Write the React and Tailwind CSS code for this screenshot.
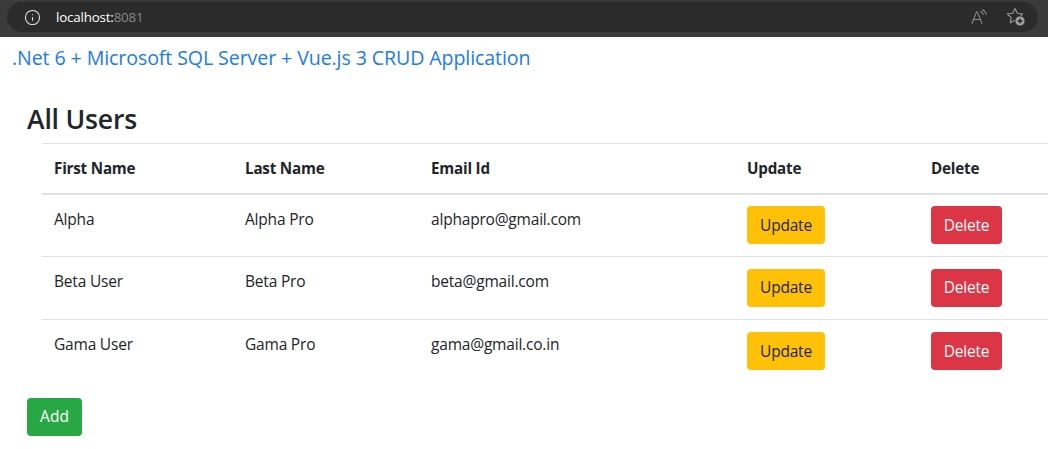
import React from 'react';
import { Info } from 'lucide-react';

const users = [
  { first: 'Alpha', last: 'Alpha Pro', email: 'alphapro@gmail.com' },
  { first: 'Beta User', last: 'Beta Pro', email: 'beta@gmail.com' },
  { first: 'Gama User', last: 'Gama Pro', email: 'gama@gmail.co.in' },
];

// Read aloud icon from the browser bar
function ReadAloudIcon() {
  return (
    <svg width="17" height="16" viewBox="0 0 20 18" fill="none" stroke="#8f8f8f" strokeWidth="1.2">
      <path d="M1 17 L6.5 3 L7.5 3 L13 17" />
      <path d="M3 12 L11 12" />
      <path d="M11 2.5 C13 3 14 4.5 14.5 6.5" />
      <path d="M13 0.5 C16 1.5 17.5 3.5 18 6.5" />
    </svg>
  );
}

// Favourite star with the small plus badge
function FavIcon() {
  return (
    <svg width="20" height="20" viewBox="0 0 20 20" fill="none">
      <path d="M9 1.5 L11.3 6.3 L16.6 7 L12.8 10.6 L13.7 15.8 L9 13.3 L4.3 15.8 L5.2 10.6 L1.4 7 L6.7 6.3 Z" stroke="#9a9a9a" strokeWidth="1.1" strokeLinejoin="round" />
      <circle cx="14" cy="14" r="5" fill="#a3a3a3" stroke="#2b2b2b" strokeWidth="0.8" />
      <path d="M14 11.5 V16.5 M11.5 14 H16.5" stroke="#222222" strokeWidth="1.3" />
    </svg>
  );
}

function BrowserBar() {
  return (
    <div className="h-[37px] bg-[#3b3b3b] pt-[2px] pl-[7px] pr-[10px]">
      <div className="h-[30px] rounded-full bg-[#2b2b2b] flex items-center pl-[17px] pr-[12px]">
        <Info size={17} color="#e6e6e6" strokeWidth={1.5} />
        <div className="ml-[15px] text-[13.4px] text-white font-['Open_Sans',sans-serif] tracking-[-0.2px]">
          localhost:<span className="text-[#8a8a8a]">8081</span>
        </div>
        <div className="ml-auto flex items-center gap-[18px]">
          <ReadAloudIcon />
          <FavIcon />
        </div>
      </div>
    </div>
  );
}

export default function App() {
  return (
    <div className="w-[1048px] h-[449px] overflow-hidden bg-white text-[#212529] font-['Open_Sans',sans-serif]">
      <BrowserBar />
      <a className="block ml-[12px] mt-[8px] h-[26px] text-[19.6px] leading-[26px] text-[#1a7bf2] tracking-[-0.1px]">
        .Net 6 + Microsoft SQL Server + Vue.js 3 CRUD Application
      </a>
      <div className="pl-[27px] pt-[31px]">
        <h3 className="text-[26.6px] leading-[34px] font-semibold tracking-[-0.2px] h-[41px]">All Users</h3>
        <table className="ml-[15px] w-[1021px] table-fixed border-collapse text-[15.5px] tracking-[-0.2px]">
          <colgroup>
            <col className="w-[191px]" />
            <col className="w-[186px]" />
            <col className="w-[316px]" />
            <col className="w-[184px]" />
            <col />
          </colgroup>
          <thead>
            <tr className="h-[50px] border-t border-b-2 border-t-[#dee2e6] border-b-[#dee2e6] font-bold text-left text-[15.2px]">
              <th className="px-3">First Name</th>
              <th className="px-3">Last Name</th>
              <th className="px-3">Email Id</th>
              <th className="px-3">Update</th>
              <th className="px-3">Delete</th>
            </tr>
          </thead>
          <tbody>
            {users.map((u, i) => (
              <tr key={u.email} className={i < 2 ? 'h-[63px] border-b border-[#dee2e6]' : 'h-[63px]'}>
                <td className="px-3 pt-[13px] align-top">{u.first}</td>
                <td className="px-3 pt-[13px] align-top">{u.last}</td>
                <td className="px-3 pt-[13px] align-top">{u.email}</td>
                <td className="px-3 align-middle">
                  <button className="block w-[78px] h-[38px] rounded-[4px] bg-[#ffc107] text-[#212529]">Update</button>
                </td>
                <td className="px-3 align-middle">
                  <button className="block w-[71px] h-[38px] rounded-[4px] bg-[#dc3545] text-white">Delete</button>
                </td>
              </tr>
            ))}
          </tbody>
        </table>
        <button className="block mt-[15px] w-[55px] h-[38px] rounded-[4px] bg-[#28a745] text-white text-[15.5px]">Add</button>
      </div>
    </div>
  );
}
